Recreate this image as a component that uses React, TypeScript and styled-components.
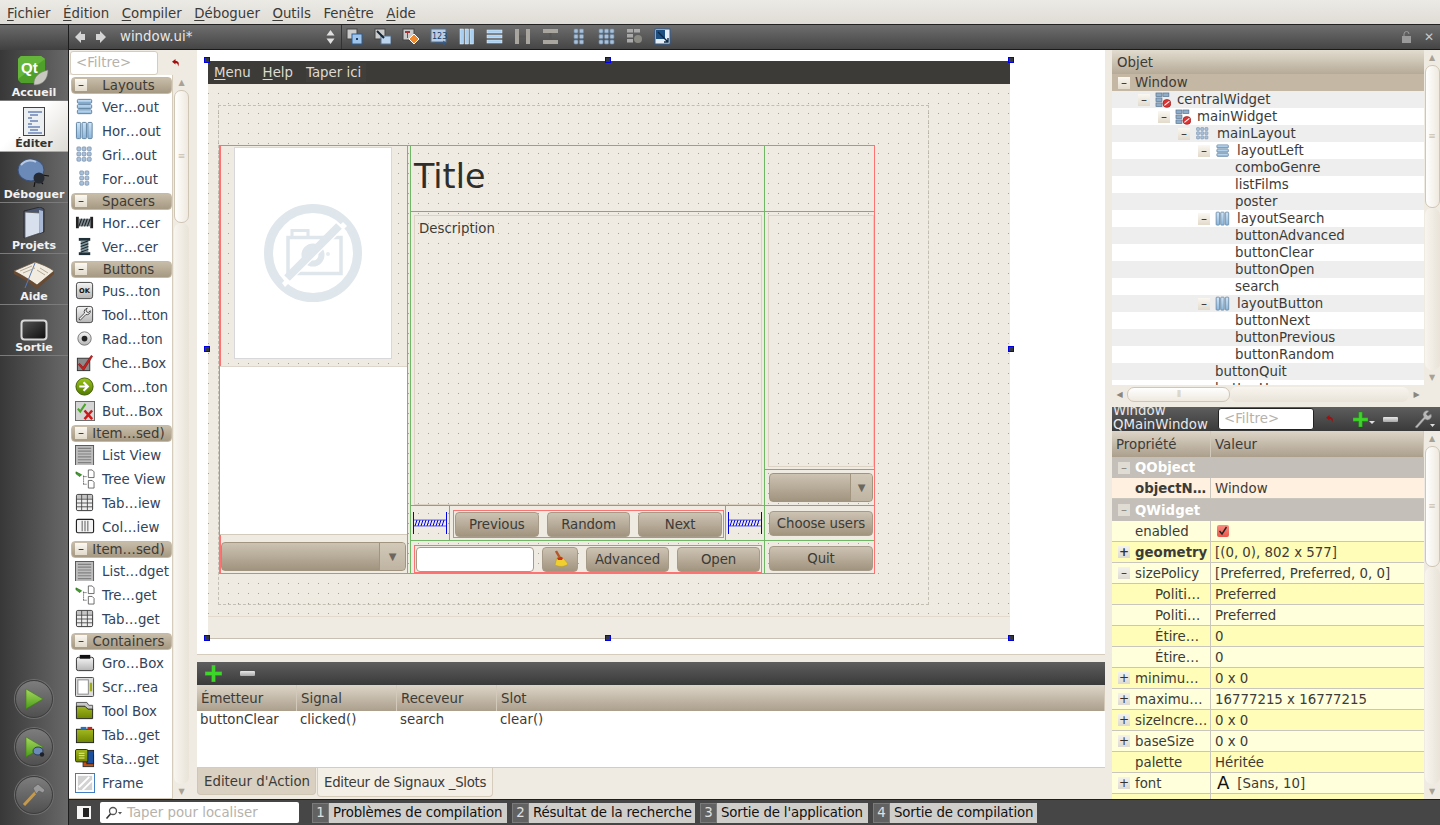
import React from 'react';
import styled, { createGlobalStyle } from 'styled-components';

const RED = '#ff7272';
const GREEN = '#6fb765';
const TAN = '#d6ccbc';
const INK = '#3c3b37';

const GlobalStyle = createGlobalStyle`
  html, body { margin: 0; padding: 0; overflow: hidden; }
  body { font-family: "DejaVu Sans", sans-serif; font-size: 13.33px; color: ${INK}; }
  * { box-sizing: border-box; }
`;

/* ---------- icons ---------- */

const BlueBar: React.FC<{ x: number; y: number; w: number; h: number }> = ({ x, y, w, h }) => (
  <rect x={x} y={y} width={w} height={h} rx="1" fill="url(#blueFill)" stroke="#5d7f9e" strokeWidth="1" />
);

const Cells: React.FC<{ cols: number; rows: number; x: number; y: number; s?: number; g?: number }> = ({ cols, rows, x, y, s = 4, g = 1.5 }) => (
  <>
    {Array.from({ length: cols * rows }).map((_, i) => (
      <rect key={i} x={x + (i % cols) * (s + g)} y={y + Math.floor(i / cols) * (s + g)} width={s} height={s} rx="1" fill="#a9c0d8" stroke="#6f8aa8" strokeWidth=".7" />
    ))}
  </>
);

const NoEntry: React.FC = () => (
  <g>
    <circle cx="12" cy="11.5" r="4" fill="#d33" stroke="#922" strokeWidth=".7" />
    <path d="M9.5 13.5l5-4" stroke="#fff" strokeWidth="1.2" />
  </g>
);

const icons: Record<string, React.ReactNode> = {
  vlayout: <><BlueBar x={2.5} y={2.5} w={15} h={4} /><BlueBar x={2.5} y={8} w={15} h={4} /><BlueBar x={2.5} y={13.5} w={15} h={4} /></>,
  hlayout: <><BlueBar x={1.5} y={1.5} w={4.5} h={17} /><BlueBar x={7.5} y={1.5} w={4.5} h={17} /><BlueBar x={13.5} y={1.5} w={4.5} h={17} /></>,
  grid: <Cells cols={3} rows={3} x={2} y={2} />,
  form: <Cells cols={2} rows={3} x={5} y={2} />,
  hspacer: (
    <g>
      <rect x="1" y="4" width="3" height="12" fill="#222" /><rect x="16" y="4" width="3" height="12" fill="#222" />
      <rect x="4" y="6" width="12" height="8" fill="#7e8a90" />
      <path d="M4 14l3-8M7 14l3-8M10 14l3-8M13 14l3-8" stroke="#1b2226" strokeWidth="1.1" />
    </g>
  ),
  vspacer: (
    <g>
      <rect x="4" y="1" width="12" height="3" fill="#1f3038" /><rect x="4" y="16" width="12" height="3" fill="#1f3038" />
      <rect x="6" y="4" width="8" height="12" fill="#7e98a0" />
      <path d="M6 7l8-3M6 10l8-3M6 13l8-3M6 16l8-3" stroke="#1b2226" strokeWidth="1.1" />
    </g>
  ),
  push: (
    <g>
      <rect x="1.5" y="1.5" width="17" height="17" rx="2.5" fill="url(#greyFill)" stroke="#444" />
      <text x="10" y="13" fontSize="7" fontWeight="700" textAnchor="middle" fill="#111" fontFamily="DejaVu Sans">OK</text>
    </g>
  ),
  tool: (
    <g>
      <rect x="1.5" y="1.5" width="17" height="17" rx="2.5" fill="url(#greyFill)" stroke="#444" />
      <path d="M13 3.5a3.5 3.5 0 0 0-3 5L4 14.5l1.5 1.5 6-6a3.5 3.5 0 0 0 4.5-4l-2 2-2-1-.5-2z" fill="#eee" stroke="#333" strokeWidth=".9" />
    </g>
  ),
  radio: <g><circle cx="10" cy="10" r="7" fill="url(#greyFill)" stroke="#777" /><circle cx="10" cy="10" r="3" fill="#222" /></g>,
  check: (
    <g>
      <rect x="2.5" y="5.5" width="13" height="13" fill="#8b8b8b" stroke="#333" />
      <path d="M5 11l3.5 4L17 2.5l1.5 1L9 18.5 3.5 12z" fill="#d41e1e" stroke="#7a0a0a" strokeWidth=".6" />
    </g>
  ),
  command: (
    <g>
      <circle cx="10" cy="10" r="9" fill="url(#greenFill)" stroke="#3e5a00" />
      <path d="M4.5 10h8M9 5.5l4.5 4.5L9 14.5" stroke="#fff" strokeWidth="2.2" fill="none" />
    </g>
  ),
  buttonbox: (
    <g>
      <rect x=".5" y=".5" width="20" height="20" fill="#d5d5d5" stroke="#666" />
      <path d="M3 8l2.5 3L11 3" stroke="#4aa52a" strokeWidth="2.2" fill="none" />
      <path d="M10 10l8 9M18 10l-8 9" stroke="#d01818" strokeWidth="2.6" />
    </g>
  ),
  list: (
    <g>
      <rect x=".5" y=".5" width="19" height="21" fill="#bdbdbd" stroke="#555" />
      <path d="M3 3.5h14M3 6.5h14M3 9.5h14M3 12.5h14M3 15.5h14M3 18.5h14" stroke="#818181" strokeWidth="1.2" />
    </g>
  ),
  tree: (
    <g>
      <path d="M1 3l6 3-2 2-4-3z" fill="#3ea02a" stroke="#205a10" strokeWidth=".6" />
      <path d="M9 7v10M9 8h3M9 16h3" stroke="#333" strokeDasharray="1 1" fill="none" />
      <path d="M14 1h4l2 2v6h-6zM14 12h4l2 2v6h-6z" fill="#fff" stroke="#444" strokeWidth=".8" />
    </g>
  ),
  table: (
    <g>
      <rect x="1.5" y="1.5" width="17" height="17" rx="1.5" fill="#eee" stroke="#333" />
      <rect x="2" y="2" width="16" height="4" fill="#c4c4c4" />
      <path d="M1.5 6.5h17M1.5 10.5h17M1.5 14.5h17M7 1.5v17M13 1.5v17" stroke="#444" strokeWidth=".9" />
    </g>
  ),
  column: (
    <g>
      <rect x="1.5" y="2.5" width="18" height="14" rx="1.5" fill="#f4f4f4" stroke="#222" strokeWidth="1.2" />
      <path d="M7.5 4v11M10.5 4v11M13.5 4v11" stroke="#555" />
    </g>
  ),
  group: (
    <g>
      <rect x="1.5" y="4.5" width="18" height="14" rx="2" fill="url(#greyFill)" stroke="#333" />
      <rect x="5" y="2" width="11" height="4" fill="#111" />
    </g>
  ),
  scroll: (
    <g>
      <rect x=".5" y=".5" width="19" height="20" rx="1" fill="#ddd" stroke="#444" />
      <rect x="3" y="3" width="11" height="15" fill="#fff" stroke="#888" />
      <rect x="15.5" y="6" width="2.5" height="9" fill="#9aaa10" />
    </g>
  ),
  toolbox: (
    <g>
      <path d="M1.5 1.5h11l2 3h4v5H1.5z" fill="#c9c9c9" stroke="#555" />
      <path d="M1.5 5.5h9l3 3h5v10h-17z" fill="url(#oliveFill)" stroke="#222" />
    </g>
  ),
  tab: (
    <g>
      <rect x="1.5" y="4.5" width="18" height="14" fill="url(#oliveFill)" stroke="#222" />
      <rect x="6" y="2" width="6" height="3" fill="#2b6fc0" />
      <rect x="13" y="2" width="5" height="3" fill="#cc2222" />
    </g>
  ),
  stacked: (
    <g>
      <rect x="8.5" y="6.5" width="11" height="12" fill="#c8500f" stroke="#333" />
      <rect x="12.5" y="1.5" width="7" height="14" fill="#1d4f9f" stroke="#222" />
      <rect x=".5" y=".5" width="13" height="13" rx="1.5" fill="url(#oliveFill)" stroke="#222" />
      <path d="M4 4.5h6M4 7h6M4 9.5h6" stroke="#f3f08a" />
    </g>
  ),
  frame: (
    <g>
      <rect x=".5" y=".5" width="20" height="20" fill="#fff" stroke="#3a78c0" />
      <rect x="3" y="3" width="15" height="15" fill="#d2d2d2" />
      <path d="M4 15L15 4M8 18L18 8" stroke="#fff" strokeWidth="2" />
    </g>
  ),
  widgetNo: (
    <g transform="scale(1.3)">
      <rect x="1" y="1" width="6" height="3.5" fill="#8fadc9" stroke="#56708d" strokeWidth=".7" />
      <rect x="8" y="1" width="6" height="3.5" fill="#8fadc9" stroke="#56708d" strokeWidth=".7" />
      <rect x="1" y="6" width="6" height="3.5" fill="#8fadc9" stroke="#56708d" strokeWidth=".7" />
      <rect x="1" y="11" width="6" height="3.5" fill="#8fadc9" stroke="#56708d" strokeWidth=".7" />
      <NoEntry />
    </g>
  ),
};

const IconDefs: React.FC = () => (
  <svg width="0" height="0" aria-hidden="true" style={{ display: 'block' }}>
    <defs>
      <linearGradient id="blueFill" x1="0" y1="0" x2="0" y2="1"><stop offset="0" stopColor="#d2e6f8" /><stop offset="1" stopColor="#8ab6dc" /></linearGradient>
      <linearGradient id="greyFill" x1="0" y1="0" x2="0" y2="1"><stop offset="0" stopColor="#f4f4f4" /><stop offset="1" stopColor="#b5b5b5" /></linearGradient>
      <linearGradient id="greenFill" x1="0" y1="0" x2="0" y2="1"><stop offset="0" stopColor="#9cc51d" /><stop offset="1" stopColor="#527a00" /></linearGradient>
      <linearGradient id="oliveFill" x1="0" y1="0" x2="0" y2="1"><stop offset="0" stopColor="#a2b820" /><stop offset="1" stopColor="#6f8500" /></linearGradient>
      <linearGradient id="playFill" x1="0" y1="0" x2="0" y2="1"><stop offset="0" stopColor="#a8d860" /><stop offset="1" stopColor="#4a9c1a" /></linearGradient>
      <linearGradient id="screenFill" x1="0" y1="0" x2="1" y2="1"><stop offset="0" stopColor="#555" /><stop offset="1" stopColor="#0c0c0c" /></linearGradient>
    </defs>
  </svg>
);

const Icon: React.FC<{ name: string; size?: number }> = ({ name, size = 20 }) => (
  <svg width={size} height={size} viewBox="0 0 21 21">{icons[name]}</svg>
);

const QtLogo = () => (
  <svg width="32" height="30" viewBox="0 0 32 30">
    <path d="M3 0h20l4 3v19l-5 5H3l-3-3V3z" fill="#4fa02a" />
    <path d="M3 0h20l4 3-27 20V3z" fill="#65b53a" />
    <text x="3" y="17" fontSize="15" fontWeight="700" fill="#fff" fontFamily="Liberation Sans">Qt</text>
    <path d="M16 29c-1-8 5-13 14-15 0 9-5 15-14 15z" fill="#c8c8c0" stroke="#777" strokeWidth=".6" />
  </svg>
);

const DocIcon = () => (
  <svg width="26" height="30" viewBox="0 0 26 30">
    <rect x="2.5" y=".5" width="21" height="28" fill="#eceff2" stroke="#444" />
    <path d="M7 5h14M9 8h8M7 11h4M9 14h8M7 17h4M7 20h12M9 23h8M7 26h14" stroke="#2b4f9a" strokeWidth="1.1" />
  </svg>
);

const BugIcon = () => (
  <svg width="34" height="30" viewBox="0 0 34 30">
    <path d="M21 21l5 5M25 17l7 1M18 24l-1 5" stroke="#111" strokeWidth="1.2" />
    <ellipse cx="14" cy="12" rx="13" ry="11" fill="#6c8ab8" stroke="#39517a" />
    <path d="M4 7c5-6 12-5 15-3" stroke="#b9cbe4" strokeWidth="2" fill="none" />
    <circle cx="22" cy="20" r="5.5" fill="#252a33" />
  </svg>
);

const FolderDoc = () => (
  <svg width="24" height="32" viewBox="0 0 24 32">
    <path d="M2 4l16-4 4 2v23l-20 6z" fill="#4a5670" stroke="#222" strokeWidth=".8" />
    <path d="M3 5l15 1v20L3 31z" fill="#d8e0ee" stroke="#555" strokeWidth=".8" />
    <path d="M17 3l4 1v21l-3 1z" fill="#a9b8d4" />
  </svg>
);

const BookIcon = () => (
  <svg width="42" height="28" viewBox="0 0 42 28">
    <path d="M1 9L22 0c6 2 14 5 19 9L24 23c-7-5-15-10-23-14z" fill="#f2ece0" stroke="#6b5b48" strokeWidth=".8" />
    <path d="M1 9v3c8 4 16 9 23 15l17-15V9L24 23C17 18 9 13 1 9z" fill="#6a4a30" />
    <path d="M22 1L12 26" stroke="#5878b8" strokeWidth="1" />
    <path d="M7 9l12-5M10 11l12-5M27 6l8 5M24 8l8 5" stroke="#b5aa96" strokeWidth="1" />
  </svg>
);

const ExitScreen = () => (
  <svg width="28" height="22" viewBox="0 0 28 22">
    <rect x="1.5" y="1.5" width="25" height="19" rx="3" fill="url(#screenFill)" stroke="#d8d8d8" strokeWidth="2" />
  </svg>
);

const PlayIcon: React.FC<{ bug?: boolean }> = ({ bug }) => (
  <svg width="22" height="22" viewBox="0 0 22 22">
    <path d="M3 1l17 10L3 21z" fill="url(#playFill)" stroke="#3c7d12" strokeWidth=".6" />
    {bug && <><ellipse cx="15" cy="15" rx="5" ry="4" fill="#6c8ab8" stroke="#2e3f5c" /><circle cx="19" cy="18.5" r="2.2" fill="#1d2026" /></>}
  </svg>
);

const HammerIcon = () => (
  <svg width="26" height="26" viewBox="0 0 26 26">
    <path d="M3 23L16 9" stroke="#c69a4c" strokeWidth="3" />
    <path d="M12 6l5-4 7 6-2 3-4-2-3 3z" fill="#9a9a9a" stroke="#555" strokeWidth=".6" />
  </svg>
);

const PlusIcon: React.FC<{ size?: number }> = ({ size = 17 }) => (
  <svg width={size} height={size} viewBox="0 0 17 17">
    <path d="M6.5 0h4v6.5H17v4h-6.5V17h-4v-6.5H0v-4h6.5z" fill="#3ed52a" stroke="#1d8a12" strokeWidth=".5" />
  </svg>
);

const MinusBar = styled.span`
  display: block;
  width: 15px;
  height: 5px;
  border-radius: 1px;
  background: linear-gradient(#e8e8e8, #a8a8a8);
`;

const ResetArrow = () => (
  <svg width="8" height="8" viewBox="0 0 8 8">
    <path d="M3.5 0L0 2.8 3.5 5.5V4c1.5 0 2.5.6 2.6 3.5C7.5 5 7 2 3.500 1.800z" fill="#a01010" />
  </svg>
);

const WrenchIcon = () => (
  <svg width="22" height="20" viewBox="0 0 22 20">
    <path d="M2 18L11 8a4 4 0 0 1 5-6l-3 3 2 2 3-2a4 4 0 0 1-6 5l-8 9z" fill="#b9b9b9" stroke="#777" strokeWidth=".5" />
    <path d="M17 15h5l-2.5 3z" fill="#ddd" />
  </svg>
);

const NavArrow: React.FC<{ right?: boolean }> = ({ right }) => (
  <svg width="10" height="12" viewBox="0 0 10 12">
    <path d={right ? 'M10 6L4 0v3H0v6h4v3z' : 'M0 6l6-6v3h4v6H6v3z'} fill="#d4d4d4" />
  </svg>
);

const toolIcons: React.ReactNode[] = [
  <g key="0"><rect x="1" y="1" width="10" height="10" fill="#ccc" stroke="#444" /><rect x="6" y="6" width="10" height="10" fill="#9ec4ec" stroke="#2c5c94" /><rect x="10" y="10" width="2" height="2" fill="#1c3e6a" /></g>,
  <g key="1"><rect x="1" y="1" width="10" height="10" fill="#ccc" stroke="#444" /><rect x="7" y="8" width="10" height="8" fill="#bcd4ee" stroke="#56708d" /><path d="M3 3l7 7" stroke="#123" strokeWidth="2" /></g>,
  <g key="2"><rect x="1" y="1" width="11" height="11" fill="#ccc" stroke="#444" /><path d="M3 3h5v2H6v5H5V5H3z" fill="#a33" /><path d="M12 6l5 5-5 5-5-5z" fill="#f08a2c" stroke="#fff" /></g>,
  <g key="3"><rect x="1" y="1" width="15" height="13" fill="#b9cde4" stroke="#56708d" /><text x="2" y="11" fontSize="8" fill="#1c3e6a" fontFamily="DejaVu Sans">123</text><path d="M5 15h10M13 13l3 2-3 2" stroke="#2c5c94" fill="none" /></g>,
  <g key="4"><rect x="2" y="1" width="3.5" height="15" fill="#a9d0f2" stroke="#e8f3fc" strokeWidth=".5" /><rect x="7" y="1" width="3.5" height="15" fill="#a9d0f2" stroke="#e8f3fc" strokeWidth=".5" /><rect x="12" y="1" width="3.5" height="15" fill="#a9d0f2" stroke="#e8f3fc" strokeWidth=".5" /></g>,
  <g key="5"><rect x="1" y="2" width="15" height="3" fill="#a9d0f2" stroke="#e8f3fc" strokeWidth=".5" /><rect x="1" y="7" width="15" height="3" fill="#a9d0f2" stroke="#e8f3fc" strokeWidth=".5" /><rect x="1" y="12" width="15" height="3" fill="#a9d0f2" stroke="#e8f3fc" strokeWidth=".5" /></g>,
  <g key="6" fill="#a8a69e"><rect x="1" y="1" width="4" height="15" /><rect x="12" y="1" width="4" height="15" /><path d="M5 8.5h7" stroke="#555" strokeWidth="2" /></g>,
  <g key="7" fill="#a8a69e"><rect x="1" y="1" width="15" height="4" /><rect x="1" y="12" width="15" height="4" /><path d="M8.5 5v7" stroke="#555" strokeWidth="2" /></g>,
  <Cells key="8" cols={2} rows={3} x={4} y={1} />,
  <Cells key="9" cols={3} rows={3} x={1} y={1} />,
  <g key="10"><rect x="1" y="1" width="6" height="3.5" fill="#aaa" /><rect x="8" y="1" width="6" height="3.5" fill="#aaa" /><rect x="1" y="6" width="6" height="3.5" fill="#aaa" /><rect x="1" y="11" width="6" height="3.5" fill="#aaa" /><circle cx="12" cy="11" r="4" fill="#8a8a82" /></g>,
  <g key="11"><rect x="1" y="1" width="15" height="15" fill="#e4eef8" stroke="#2c5c94" /><rect x="2" y="2" width="9" height="9" fill="#1d4f80" /><path d="M4 4l10 10M14 10v4h-4" stroke="#0c2a48" strokeWidth="1.4" fill="none" /></g>,
];

/* ---------- shell ---------- */

const Page = styled.div`
  width: 1440px;
  height: 825px;
  display: flex;
  flex-direction: column;
  overflow: hidden;
  background: #f0ebe2;
`;

const MenuBar = styled.nav`
  height: 24px;
  flex: none;
  display: flex;
  align-items: center;
  gap: 12.5px;
  padding: 2px 0 0 7px;
  background: linear-gradient(#eceae5, #dfdcd6);
`;

const MenuLabel = styled.span`
  white-space: nowrap;
  u { text-underline-offset: 2px; }
`;

const Body = styled.div`
  flex: 1;
  min-height: 0;
  display: flex;
`;

const ModeBar = styled.aside`
  width: 69px;
  flex: none;
  display: flex;
  flex-direction: column;
  background: linear-gradient(90deg, #383838, #686868);
  border-right: 1px solid #1d1d1d;
`;

const ModeCorner = styled.div`
  height: 26px;
  flex: none;
  background: linear-gradient(#6a6a6a, #404040);
  border-top: 1px solid #222;
`;

const ModeItem = styled.div<{ $active?: boolean }>`
  height: 51px;
  flex: none;
  display: flex;
  flex-direction: column;
  align-items: center;
  justify-content: flex-end;
  padding-bottom: 1px;
  font-size: 11px;
  font-weight: 700;
  line-height: 13px;
  color: ${({ $active }) => ($active ? '#33332f' : '#f2f2f2')};
  background: ${({ $active }) => ($active ? 'linear-gradient(135deg, #fff 40%, #dedbd5)' : 'transparent')};
  border-bottom: 1px solid ${({ $active }) => ($active ? '#a2a6c0' : '#7b7b7b')};
`;

const RunButtons = styled.div`
  margin-top: auto;
  display: flex;
  flex-direction: column;
  align-items: center;
  gap: 10px;
  padding-bottom: 11px;
`;

const RunButton = styled.div`
  width: 38px;
  height: 38px;
  display: flex;
  align-items: center;
  justify-content: center;
  border-radius: 50%;
  background: linear-gradient(#7d7d7d, #505050);
  border: 1px solid #3e3e3e;
  box-shadow: 0 0 0 1px #6f6f6f;
`;

const Content = styled.div`
  flex: 1;
  min-width: 0;
  display: flex;
  flex-direction: column;
`;

const ToolBar = styled.div`
  height: 26px;
  flex: none;
  display: flex;
  align-items: center;
  padding-bottom: 1px;
  background: linear-gradient(#6e6e6e, #454545);
  border-top: 1px solid #222;
  border-bottom: 1px solid #1a1a1a;
`;

const NavArrows = styled.div`
  width: 51px;
  flex: none;
  display: flex;
  align-items: center;
  gap: 11px;
  padding-left: 6px;
`;

const FileName = styled.div`
  width: 206px;
  flex: none;
  color: #e6e6e6;
`;

const Updown = styled.svg`
  flex: none;
  margin-right: 6px;
`;

const ToolDivider = styled.div`
  width: 1px;
  height: 24px;
  background: #333;
  margin-right: 4px;
`;

const ToolIcons = styled.div`
  display: flex;
  gap: 11px;
`;

const ToolEnd = styled.div`
  margin-left: auto;
  display: flex;
  align-items: center;
  gap: 11px;
  padding-right: 6px;
  color: #c8c8c8;
  font-size: 12px;
  line-height: 1;
`;

const Workspace = styled.div`
  flex: 1;
  min-height: 0;
  display: flex;
`;

/* ---------- widget box ---------- */

const WidgetBox = styled.section`
  width: 121px;
  flex: none;
  display: flex;
  flex-direction: column;
  background: #f0ebe2;
`;

const FilterRow = styled.div`
  height: 25px;
  flex: none;
  display: flex;
  align-items: center;
  padding: 1px 0 0 1px;
  gap: 14px;
`;

const FilterInput = styled.div<{ $dark?: boolean }>`
  width: ${({ $dark }) => ($dark ? '96px' : '88px')};
  height: ${({ $dark }) => ($dark ? '22px' : '24px')};
  flex: none;
  padding: ${({ $dark }) => ($dark ? '2px 5px' : '3px 5px')};
  background: #fff;
  border: 1px solid ${({ $dark }) => ($dark ? '#222' : TAN)};
  border-radius: 3px;
  color: #b5b2ab;
`;

const WidgetColumns = styled.div`
  flex: 1;
  min-height: 0;
  display: flex;
`;

const WidgetList = styled.div`
  width: 104px;
  flex: none;
  padding-left: 1px;
  background: #fff;
  border-right: 1px solid ${TAN};
  border-bottom: 1px solid ${TAN};
`;

const Category = styled.div`
  height: 20px;
  display: flex;
  align-items: center;
  margin: 0 0 0 1px;
  padding: 0 2px 0 4px;
  width: 101px;
  position: relative;
  &::before {
    content: '';
    position: absolute;
    inset: 2px 0 1px 0;
    border-radius: 4px;
    background: linear-gradient(#c8bda9, #a69983);
    border: 1px solid #c4baa8;
  }
`;

const Collapse = styled.span<{ $box?: number }>`
  position: relative;
  flex: none;
  display: flex;
  align-items: center;
  justify-content: center;
  width: ${({ $box }) => $box ?? 12}px;
  height: ${({ $box }) => $box ?? 12}px;
  background: linear-gradient(#fbf8f2, #e2dacb);
  font-size: 12px;
  line-height: 1;
  color: #333;
`;

const CategoryText = styled.span`
  position: relative;
  flex: 1;
  text-align: center;
  white-space: nowrap;
`;

const WidgetRow = styled.div`
  height: 24px;
  display: flex;
  align-items: center;
  gap: 7px;
  padding-left: 4px;
  white-space: nowrap;
  color: #33445a;
`;

const IconSlot = styled.span`
  width: 21px;
  height: 21px;
  flex: none;
  display: flex;
  align-items: center;
  justify-content: center;
`;

const VTrack = styled.div<{ $width: number }>`
  width: ${({ $width }) => $width}px;
  flex: none;
  display: flex;
  flex-direction: column;
  align-items: center;
  background: #f0ebe2;
`;

const ArrowCap = styled.div`
  height: 15px;
  flex: none;
  display: flex;
  align-items: center;
  justify-content: center;
  font-size: 8px;
  line-height: 1;
  color: #a8a296;
`;

const Thumb = styled.div<{ $size: number; $horizontal?: boolean }>`
  flex: none;
  ${({ $size, $horizontal }) => ($horizontal ? `width: ${$size}px; height: 15px;` : `height: ${$size}px; width: 15px;`)}
  border: 1px solid #cfc6b6;
  border-radius: 7px;
  background: ${({ $horizontal }) => ($horizontal ? 'linear-gradient(#fff, #efe9df)' : 'linear-gradient(90deg, #fff, #efe9df)')};
  display: flex;
  align-items: center;
  justify-content: center;
  color: #c9c1b2;
  font-size: 9px;
  line-height: 1;
`;

const TrackRest = styled.div<{ $horizontal?: boolean }>`
  flex: 1;
  ${({ $horizontal }) => ($horizontal ? 'height: 15px;' : 'width: 15px;')}
  border-radius: 7px;
  background: ${({ $horizontal }) => ($horizontal ? 'linear-gradient(#f8f5ef, #e9e3d8)' : 'linear-gradient(90deg, #f8f5ef, #e9e3d8)')};
`;

const VScroll: React.FC<{ width: number; thumb: number }> = ({ width, thumb }) => (
  <VTrack $width={width}>
    <ArrowCap>▲</ArrowCap>
    <Thumb $size={thumb}>≡</Thumb>
    <TrackRest />
    <ArrowCap>▼</ArrowCap>
  </VTrack>
);

/* ---------- centre: form editor ---------- */

const SplitterV = styled.div`
  width: 7px;
  flex: none;
  background: #f0ebe2;
`;

const Center = styled.main`
  width: 908px;
  flex: none;
  display: flex;
  flex-direction: column;
`;

const FormArea = styled.div`
  height: 605px;
  flex: none;
  padding: 11px;
  background: #fff;
  border-bottom: 1px solid ${TAN};
`;

const FormWindow = styled.div`
  position: relative;
  width: 802px;
  height: 577px;
  display: flex;
  flex-direction: column;
  background: #f0ebe2;
  box-shadow: 0 1px 0 #c8c0b2;
`;

const Handle = styled.span<{ $x: number; $y: number }>`
  position: absolute;
  left: ${({ $x }) => $x}px;
  top: ${({ $y }) => $y}px;
  width: 6px;
  height: 6px;
  background: #33383f;
  border: 1px solid #0000e6;
`;

const FormMenu = styled.div`
  height: 23px;
  flex: none;
  display: flex;
  align-items: center;
  padding-left: 6px;
  gap: 12px;
  background: #3c3b37;
  color: #dfdbd2;
`;

const FormMenuItem = styled.span<{ $placeholder?: boolean }>`
  ${({ $placeholder }) => $placeholder && 'background: #413f3b; padding: 2px 5px 2px 0; margin-left: 1px;'}
  u { text-underline-offset: 2px; }
`;

const FormBody = styled.div`
  flex: 1;
  padding: 21px 0 0 10px;
  background-color: #f0ebe2;
  background-image: radial-gradient(circle at 0.5px 0.5px, #a8a297 0.5px, transparent 0.5px);
  background-size: 10px 10px;
  background-position: 0 9px;
`;

const MainLayoutFrame = styled.div`
  width: 711px;
  height: 500px;
  padding-top: 39px;
  border: 1px dashed #c4bfb5;
`;

const DesignGrid = styled.div`
  width: 656px;
  height: 429px;
  display: grid;
  grid-template-columns: 190px 354px 110px;
  grid-template-rows: 66px 258px 36px 35px 32px;
  border: 1px solid ${RED};
`;

const LeftCell = styled.div`
  grid-column: 1;
  grid-row: 1 / 6;
  width: 188px;
  display: flex;
  flex-direction: column;
  border-right: 1px solid ${RED};
  box-shadow: inset 1px 0 0 ${RED};
`;

const Poster = styled.div`
  width: 158px;
  height: 212px;
  flex: none;
  margin: 1px 0 0 14px;
  display: flex;
  align-items: center;
  justify-content: center;
  background: #fff;
  border: 1px solid #d8d8da;
`;

const FilmList = styled.div`
  height: 169px;
  flex: none;
  margin-top: 7px;
  background: #fff;
  border-top: 1px solid #dcd6cc;
  border-bottom: 1px solid #d2cabb;
`;

const Cell = styled.div<{ $col: number; $row: string; $bottom?: boolean; $pad?: string }>`
  grid-column: ${({ $col }) => $col};
  grid-row: ${({ $row }) => $row};
  border-left: 1px solid ${GREEN};
  ${({ $bottom }) => $bottom && `border-bottom: 1px solid ${GREEN};`}
  padding: ${({ $pad }) => $pad ?? '0'};
  min-height: 0;
  display: flex;
`;

const TitleText = styled.div`
  font-size: 33.33px;
  line-height: 1;
  padding: 14px 0 0 3px;
  color: #2f2e2b;
`;

const Frame = styled.div`
  flex: 1;
  padding: 5px 4px;
  border: 1px solid #dcd3c4;
`;

const Combo = styled.div<{ $arrow: number }>`
  flex: 1;
  height: 29px;
  display: flex;
  border: 1px solid #a1957f;
  border-radius: 4px;
  overflow: hidden;
  background: linear-gradient(#cdc3b3, #a1947f);
  span {
    margin-left: auto;
    width: ${({ $arrow }) => $arrow}px;
    display: flex;
    align-items: center;
    justify-content: center;
    background: linear-gradient(#d2c9b9, #bfb4a2);
    border-left: 1px solid #a1957f;
    font-size: 10px;
    color: #6b675e;
  }
`;

const LeftCombo = styled(Combo)`
  flex: none;
  margin: 7px 1px 0;
`;

const NavCell = styled.div`
  grid-column: 2;
  grid-row: 4;
  display: grid;
  grid-template-columns: 39px 1fr 39px;
  border-left: 1px solid ${GREEN};
  border-bottom: 1px solid ${GREEN};
`;

const SpacerCell = styled.div<{ $last?: boolean }>`
  display: flex;
  align-items: center;
  justify-content: center;
  ${({ $last }) => ($last ? `border-left: 1px solid ${GREEN}; padding-left: 1px;` : `border-right: 1px solid ${GREEN};`)}
`;

const RedGroup = styled.div<{ $gap: number; $margin: string; $pad: string }>`
  flex: 1;
  display: flex;
  align-items: center;
  gap: ${({ $gap }) => $gap}px;
  margin: ${({ $margin }) => $margin};
  padding: ${({ $pad }) => $pad};
  border: 1px solid ${RED};
`;

const GroupCell = styled.div`
  grid-column: 2;
  grid-row: 5;
  display: flex;
  border-left: 1px solid ${GREEN};
`;

const DesignButton = styled.div<{ $width?: number }>`
  height: 25px;
  flex: ${({ $width }) => ($width ? `0 0 ${$width}px` : '1')};
  display: flex;
  align-items: center;
  justify-content: center;
  white-space: nowrap;
  letter-spacing: -0.1px;
  border: 1px solid #a69b88;
  border-radius: 4px;
  background: linear-gradient(#cdc3b3, #a1947f);
  color: ${INK};
`;

const SearchInput = styled.div`
  width: 118px;
  height: 25px;
  flex: none;
  background: #fff;
  border: 1px solid #a69b88;
  border-radius: 4px;
`;

const FormStatus = styled.div`
  height: 22px;
  flex: none;
  background: #f0ebe2;
  border-top: 1px solid #e2dbcd;
`;

const Spring = () => (
  <svg width="35" height="22" viewBox="0 0 35 22">
    <path d="M.5 0v22M33.5 0v22" stroke="#0000e6" />
    <path d="M1 8h32M1 14h32" stroke="#0000e6" strokeWidth=".6" />
    <path d="M2 14l2-6M5 14l2-6M8 14l2-6M11 14l2-6M14 14l2-6M17 14l2-6M20 14l2-6M23 14l2-6M26 14l2-6M29 14l2-6" stroke="#0000e6" strokeWidth="1" />
  </svg>
);

const BroomIcon = () => (
  <svg width="20" height="20" viewBox="0 0 20 20">
    <path d="M6 2l4 7" stroke="#b5552a" strokeWidth="2.5" />
    <path d="M7 9c3-2 6-1 7 1l4 5c-3 3-9 3-13 1 1-3 1-5 2-7z" fill="#f0d030" stroke="#b89a10" strokeWidth=".5" />
    <path d="M7 9c2-1.5 5-1.5 6 0l-1 2-4 0z" fill="#c83020" />
  </svg>
);

const NoPhoto = () => (
  <svg width="100" height="100" viewBox="0 0 100 100">
    <g fill="none" stroke="#dfe6ec">
      <circle cx="50" cy="50" r="44.5" strokeWidth="9" />
      <path d="M29 27.5h16v7H29z" strokeWidth="3" />
      <path d="M25 34.5h53v36H25z" strokeWidth="3.5" />
      <circle cx="50" cy="52" r="8.5" strokeWidth="6" />
    </g>
    <circle cx="65" cy="51" r="2" fill="#e6ebef" />
    <path d="M80 19L19 80l3 4 62-61z" fill="#fff" />
    <path d="M76 23L24 75" stroke="#dfe6ec" strokeWidth="8" />
  </svg>
);

/* ---------- signals panel ---------- */

const PanelGrip = styled.div`
  height: 7px;
  flex: none;
  background: #f0ebe2;
`;

const DarkBar = styled.div<{ $height: number }>`
  height: ${({ $height }) => $height}px;
  flex: none;
  display: flex;
  align-items: center;
  background: linear-gradient(#5e5e5e, #3a3a3a);
`;

const SignalBar = styled(DarkBar)`
  gap: 18px;
  padding-left: 8px;
`;

const HeaderRow = styled.div<{ $height: number; $columns: string }>`
  height: ${({ $height }) => $height}px;
  flex: none;
  display: grid;
  grid-template-columns: ${({ $columns }) => $columns};
  background: linear-gradient(#ddd5c8, #ab9f8c);
`;

const HeaderCell = styled.div`
  display: flex;
  align-items: center;
  padding-left: 4px;
  border-right: 1px solid #d2c9ba;
`;

const SignalBody = styled.div`
  height: 57px;
  flex: none;
  padding-top: 1px;
  background: #fff;
  border-bottom: 1px solid ${TAN};
`;

const SignalRow = styled.div`
  height: 16px;
  display: grid;
  grid-template-columns: 100px 100px 100px 1fr;
  line-height: 16px;
  padding-left: 3px;
`;

const TabStrip = styled.div`
  height: 30px;
  flex: none;
  display: flex;
  align-items: flex-start;
  background: #f0ebe2;
`;

const PanelTab = styled.div<{ $active?: boolean }>`
  height: ${({ $active }) => ($active ? 29 : 27)}px;
  display: flex;
  align-items: center;
  padding: ${({ $active }) => ($active ? '0 6px' : '0 5px 0 6px')};
  background: ${({ $active }) => ($active ? '#f4efe6' : '#d9d0c1')};
  border: 1px solid ${({ $active }) => ($active ? TAN : '#cfc6b6')};
  border-top: none;
  border-radius: 0 0 4px 4px;
  white-space: nowrap;
  letter-spacing: ${({ $active }) => ($active ? '-0.32px' : '0')};
  margin-left: ${({ $active }) => ($active ? '1px' : '0')};
`;

/* ---------- right column ---------- */

const RightColumn = styled.aside`
  flex: 1;
  min-width: 0;
  display: flex;
  flex-direction: column;
  padding-left: 7px;
`;

const TreePanel = styled.div`
  height: 353px;
  flex: none;
  display: flex;
  flex-direction: column;
`;

const TreeTop = styled.div`
  flex: 1;
  min-height: 0;
  display: flex;
`;

const TreeMain = styled.div`
  flex: 1;
  min-width: 0;
  overflow: hidden;
  background: #fff;
`;

const PanelHeader = styled.div`
  height: 24px;
  display: flex;
  align-items: center;
  padding-left: 5px;
  background: linear-gradient(#e2dccf, #b6aa97);
`;

const TreeRow = styled.div<{ $level: number; $shade: 'sel' | 'alt' | 'none' }>`
  height: 17px;
  display: flex;
  align-items: center;
  padding-left: ${({ $level }) => 6 + $level * 20}px;
  white-space: nowrap;
  background: ${({ $shade }) => ($shade === 'sel' ? '#c4b8a5' : $shade === 'alt' ? '#eeeeee' : '#fff')};
`;

const Expander = styled(Collapse)<{ $hidden?: boolean }>`
  margin-right: 5px;
  visibility: ${({ $hidden }) => ($hidden ? 'hidden' : 'visible')};
`;

const TreeIcon = styled.span`
  width: 16px;
  height: 16px;
  flex: none;
  margin-right: 6px;
  display: flex;
  align-items: center;
  justify-content: center;
  overflow: visible;
`;

const HScroll = styled.div`
  height: 18px;
  flex: none;
  display: flex;
  align-items: center;
  padding-right: 16px;
  background: #f0ebe2;
`;

const HArrow = styled.div`
  width: 15px;
  flex: none;
  display: flex;
  justify-content: center;
  font-size: 8px;
  color: #8c867a;
`;

const PropBar = styled(DarkBar)`
  margin-top: 4px;
  padding-left: 1px;
  overflow: hidden;
`;

const PropTitle = styled.div`
  width: 105px;
  flex: none;
  margin-top: -3px;
  line-height: 14px;
  color: #e8e8e8;
  white-space: nowrap;
`;

const PropTools = styled.div`
  flex: 1;
  display: flex;
  align-items: center;
  padding-left: 12px;
`;

const PropToolGap = styled.span<{ $width: number }>`
  display: block;
  flex: none;
  width: ${({ $width }) => $width}px;
`;

const DropCaret = styled.span`
  width: 0;
  height: 0;
  flex: none;
  align-self: flex-end;
  margin: 0 0 5px 1px;
  border-left: 3px solid transparent;
  border-right: 3px solid transparent;
  border-top: 3px solid #e0e0e0;
`;

const PropsPanel = styled.div`
  flex: 1;
  min-height: 0;
  display: flex;
`;

const PropsMain = styled.div`
  flex: 1;
  min-width: 0;
  overflow: hidden;
  background: #ffffd8;
`;

const PropRow = styled.div<{ $tone: string }>`
  height: 21px;
  display: grid;
  grid-template-columns: 99px 1fr;
  background: ${({ $tone }) => $tone};
  border-bottom: 1px solid #c9c6bd;
`;

const PropName = styled.div<{ $bold?: boolean; $indent: number }>`
  display: flex;
  align-items: center;
  padding-left: ${({ $indent }) => $indent}px;
  white-space: nowrap;
  font-weight: ${({ $bold }) => ($bold ? 700 : 400)};
  border-right: 1px solid #c9c6bd;
`;

const PropValue = styled.div`
  display: flex;
  align-items: center;
  padding-left: 4px;
  white-space: nowrap;
`;

const GroupRow = styled.div<{ $tall?: boolean }>`
  height: ${({ $tall }) => ($tall ? 22 : 21)}px;
  display: flex;
  align-items: center;
  padding-left: 6px;
  gap: 5px;
  background: #c4bfb8;
  color: #fff;
  font-weight: 700;
`;

const GroupBox = styled.span`
  width: 12px;
  height: 12px;
  background: #e0dcd4;
  display: flex;
  align-items: center;
  justify-content: center;
  color: #8a867e;
  font-size: 12px;
  line-height: 1;
  font-weight: 400;
`;

const SmallBox = styled(Collapse)`
  width: 12px;
  height: 12px;
  margin-right: 5px;
  background: linear-gradient(#f4f2ed, #dedad2);
`;

const CheckMark = styled.span`
  width: 12px;
  height: 12px;
  display: flex;
  align-items: center;
  justify-content: center;
  margin-left: 2px;
  background: linear-gradient(#fb8c80, #e8584a);
  border-radius: 2px;
`;

const FontGlyph = styled.span`
  font-size: 18px;
  line-height: 1;
  color: #111;
  margin-right: 8px;
  margin-left: 2px;
`;

/* ---------- status bar ---------- */

const StatusBar = styled.footer`
  height: 26px;
  flex: none;
  display: flex;
  align-items: center;
  background: #464646;
  border-top: 1px solid #1e1e1e;
  padding-left: 8px;
`;

const SideToggle = styled.div`
  width: 14px;
  height: 13px;
  flex: none;
  border: 2px solid #f5f5f5;
  border-left-width: 6px;
  background: #222;
  margin-right: 9px;
`;

const Locator = styled.div`
  width: 199px;
  height: 21px;
  flex: none;
  display: flex;
  align-items: center;
  gap: 4px;
  padding-left: 5px;
  background: #fff;
  border-radius: 2px;
  color: #b5b2ab;
  margin-right: 13px;
`;

const OutputButton = styled.div<{ $width: number }>`
  height: 20px;
  width: ${({ $width }) => $width}px;
  flex: none;
  display: flex;
  align-items: stretch;
  margin-right: 5px;
  color: #111;
  white-space: nowrap;
  letter-spacing: -0.15px;
`;

const OutputNumber = styled.span`
  width: 17px;
  flex: none;
  display: flex;
  align-items: center;
  justify-content: center;
  background: #626262;
  color: #e0e0e0;
  border: 1px solid #7b7b7b;
`;

const OutputLabel = styled.span`
  flex: 1;
  display: flex;
  align-items: center;
  padding-left: 4px;
  background: #d0cecb;
`;

/* ---------- data ---------- */

type PaletteEntry = { title: string; items: [string, string][] };

const palette: PaletteEntry[] = [
  { title: 'Layouts', items: [['vlayout', 'Ver…out'], ['hlayout', 'Hor…out'], ['grid', 'Gri…out'], ['form', 'For…out']] },
  { title: 'Spacers', items: [['hspacer', 'Hor…cer'], ['vspacer', 'Ver…cer']] },
  { title: 'Buttons', items: [['push', 'Pus…ton'], ['tool', 'Tool…tton'], ['radio', 'Rad…ton'], ['check', 'Che…Box'], ['command', 'Com…ton'], ['buttonbox', 'But…Box']] },
  { title: 'Item…sed)', items: [['list', 'List View'], ['tree', 'Tree View'], ['table', 'Tab…iew'], ['column', 'Col…iew']] },
  { title: 'Item…sed)', items: [['list', 'List…dget'], ['tree', 'Tre…get'], ['table', 'Tab…get']] },
  { title: 'Containers', items: [['group', 'Gro…Box'], ['scroll', 'Scr…rea'], ['toolbox', 'Tool Box'], ['tab', 'Tab…get'], ['stacked', 'Sta…get'], ['frame', 'Frame']] },
];

type TreeNode = { name: string; level: number; icon?: string; open?: boolean };

const tree: TreeNode[] = [
  { name: 'Window', level: 0, open: true },
  { name: 'centralWidget', level: 1, icon: 'widgetNo', open: true },
  { name: 'mainWidget', level: 2, icon: 'widgetNo', open: true },
  { name: 'mainLayout', level: 3, icon: 'grid', open: true },
  { name: 'layoutLeft', level: 4, icon: 'vlayout', open: true },
  { name: 'comboGenre', level: 5 },
  { name: 'listFilms', level: 5 },
  { name: 'poster', level: 5 },
  { name: 'layoutSearch', level: 4, icon: 'hlayout', open: true },
  { name: 'buttonAdvanced', level: 5 },
  { name: 'buttonClear', level: 5 },
  { name: 'buttonOpen', level: 5 },
  { name: 'search', level: 5 },
  { name: 'layoutButton', level: 4, icon: 'hlayout', open: true },
  { name: 'buttonNext', level: 5 },
  { name: 'buttonPrevious', level: 5 },
  { name: 'buttonRandom', level: 5 },
  { name: 'buttonQuit', level: 4 },
  { name: 'buttonUsers', level: 4 },
];

type PropItem = { name: string; value: string; bold?: boolean; box?: '+' | '–'; sub?: boolean };

const TONE_A = '#ffffdc';
const TONE_B = '#fffdb8';

const widgetProps: PropItem[] = [
  { name: 'geometry', value: '[(0, 0), 802 x 577]', bold: true, box: '+' },
  { name: 'sizePolicy', value: '[Preferred, Preferred, 0, 0]', box: '–' },
  { name: 'Politi…', value: 'Preferred', sub: true },
  { name: 'Politi…', value: 'Preferred', sub: true },
  { name: 'Étire…', value: '0', sub: true },
  { name: 'Étire…', value: '0', sub: true },
  { name: 'minimu…', value: '0 x 0', box: '+' },
  { name: 'maximu…', value: '16777215 x 16777215', box: '+' },
  { name: 'sizeIncre…', value: '0 x 0', box: '+' },
  { name: 'baseSize', value: '0 x 0', box: '+' },
  { name: 'palette', value: 'Héritée' },
];

const handles: [number, number][] = [[-4, -4], [397, -4], [800, -4], [-4, 285], [800, 285], [-4, 574], [397, 574], [800, 574]];

const modes: { label: string; art: React.ReactNode }[] = [
  { label: 'Accueil', art: <QtLogo /> },
  { label: 'Éditer', art: <DocIcon /> },
  { label: 'Déboguer', art: <BugIcon /> },
  { label: 'Projets', art: <FolderDoc /> },
  { label: 'Aide', art: <BookIcon /> },
  { label: 'Sortie', art: <ExitScreen /> },
];

const menuItems: [string, string][] = [['F', 'ichier'], ['É', 'dition'], ['C', 'ompiler'], ['D', 'éboguer'], ['O', 'utils']];

const outputs: [string, string, number][] = [
  ['1', 'Problèmes de compilation', 195],
  ['2', 'Résultat de la recherche', 183],
  ['3', "Sortie de l'application", 168],
  ['4', 'Sortie de compilation', 164],
];

/* ---------- page ---------- */

export default function App() {
  return (
    <Page>
      <GlobalStyle />
      <IconDefs />
      <MenuBar>
        {menuItems.map(([key, rest]) => (
          <MenuLabel key={key}><u>{key}</u>{rest}</MenuLabel>
        ))}
        <MenuLabel>Fen<u>ê</u>tre</MenuLabel>
        <MenuLabel><u>A</u>ide</MenuLabel>
      </MenuBar>

      <Body>
        <ModeBar>
          <ModeCorner />
          {modes.map((m, i) => (
            <ModeItem key={m.label} $active={i === 1}>
              {m.art}
              {m.label}
            </ModeItem>
          ))}
          <RunButtons>
            <RunButton><PlayIcon /></RunButton>
            <RunButton><PlayIcon bug /></RunButton>
            <RunButton><HammerIcon /></RunButton>
          </RunButtons>
        </ModeBar>

        <Content>
          <ToolBar>
            <NavArrows><NavArrow /><NavArrow right /></NavArrows>
            <FileName>window.ui*</FileName>
            <Updown width="9" height="14" viewBox="0 0 9 14"><path d="M4.5 0l4 5.5H.5zM4.500 14l4-5.500H.5z" fill="#e0e0e0" /></Updown>
            <ToolDivider />
            <ToolIcons>
              {toolIcons.map((node, i) => (
                <svg key={i} width="17" height="17" viewBox="0 0 17 17">{node}</svg>
              ))}
            </ToolIcons>
            <ToolEnd>
              <svg width="12" height="12" viewBox="0 0 12 12"><rect x="1" y="5" width="9" height="7" fill="#9a9a9a" /><path d="M3 5V3a2.5 2.5 0 0 1 5 0" stroke="#9a9a9a" fill="none" /></svg>
              <span>✕</span>
            </ToolEnd>
          </ToolBar>

          <Workspace>
            <WidgetBox>
              <FilterRow>
                <FilterInput>&lt;Filtre&gt;</FilterInput>
                <ResetArrow />
              </FilterRow>
              <WidgetColumns>
                <WidgetList>
                  {palette.map((section, s) => (
                    <React.Fragment key={s}>
                      <Category>
                        <Collapse>–</Collapse>
                        <CategoryText>{section.title}</CategoryText>
                      </Category>
                      {section.items.map(([icon, label], i) => (
                        <WidgetRow key={i}>
                          <IconSlot><Icon name={icon} /></IconSlot>
                          {label}
                        </WidgetRow>
                      ))}
                    </React.Fragment>
                  ))}
                </WidgetList>
                <VScroll width={17} thumb={133} />
              </WidgetColumns>
            </WidgetBox>
            <SplitterV />

            <Center>
              <FormArea>
                <FormWindow>
                  {handles.map(([x, y]) => <Handle key={`${x}-${y}`} $x={x} $y={y} />)}
                  <FormMenu>
                    <FormMenuItem><u>M</u>enu</FormMenuItem>
                    <FormMenuItem><u>H</u>elp</FormMenuItem>
                    <FormMenuItem $placeholder>Taper ici</FormMenuItem>
                  </FormMenu>
                  <FormBody>
                    <MainLayoutFrame>
                      <DesignGrid>
                        <LeftCell>
                          <Poster><NoPhoto /></Poster>
                          <FilmList />
                          <LeftCombo $arrow={26}><span>▼</span></LeftCombo>
                        </LeftCell>
                        <Cell $col={2} $row="1" $bottom><TitleText>Title</TitleText></Cell>
                        <Cell $col={3} $row="1" $bottom />
                        <Cell $col={2} $row="2 / 4" $bottom $pad="3px 2px 0 3px"><Frame>Description</Frame></Cell>
                        <Cell $col={3} $row="2" $bottom $pad="3px 0 2px 3px"><Frame /></Cell>
                        <Cell $col={3} $row="3" $bottom $pad="3px 1px 2px 4px"><Combo $arrow={22}><span>▼</span></Combo></Cell>
                        <NavCell>
                          <SpacerCell><Spring /></SpacerCell>
                          <RedGroup $gap={8} $margin="4px 1px 2px 3px" $pad="0 1px">
                            <DesignButton>Previous</DesignButton>
                            <DesignButton>Random</DesignButton>
                            <DesignButton>Next</DesignButton>
                          </RedGroup>
                          <SpacerCell $last><Spring /></SpacerCell>
                        </NavCell>
                        <Cell $col={3} $row="4" $bottom $pad="5px 1px 3px 4px"><DesignButton>Choose users</DesignButton></Cell>
                        <GroupCell>
                          <RedGroup $gap={8} $margin="4px 2px 0 3px" $pad="0 1px">
                            <SearchInput />
                            <DesignButton $width={36}><BroomIcon /></DesignButton>
                            <DesignButton>Advanced</DesignButton>
                            <DesignButton>Open</DesignButton>
                          </RedGroup>
                        </GroupCell>
                        <Cell $col={3} $row="5" $pad="5px 1px 2px 4px"><DesignButton>Quit</DesignButton></Cell>
                      </DesignGrid>
                    </MainLayoutFrame>
                  </FormBody>
                  <FormStatus />
                </FormWindow>
              </FormArea>

              <PanelGrip />
              <SignalBar $height={23}>
                <PlusIcon />
                <MinusBar />
              </SignalBar>
              <HeaderRow $height={26} $columns="100px 100px 100px 1fr">
                <HeaderCell>Émetteur</HeaderCell>
                <HeaderCell>Signal</HeaderCell>
                <HeaderCell>Receveur</HeaderCell>
                <HeaderCell>Slot</HeaderCell>
              </HeaderRow>
              <SignalBody>
                <SignalRow>
                  <span>buttonClear</span>
                  <span>clicked()</span>
                  <span>search</span>
                  <span>clear()</span>
                </SignalRow>
              </SignalBody>
              <TabStrip>
                <PanelTab>Editeur d'Action</PanelTab>
                <PanelTab $active>Editeur de Signaux _Slots</PanelTab>
              </TabStrip>
            </Center>

            <RightColumn>
              <TreePanel>
                <TreeTop>
                  <TreeMain>
                    <PanelHeader>Objet</PanelHeader>
                    {tree.map((node, i) => (
                      <TreeRow key={node.name} $level={node.level} $shade={i === 0 ? 'sel' : i % 2 ? 'alt' : 'none'}>
                        <Expander $hidden={!node.open}>–</Expander>
                        {node.icon && <TreeIcon><Icon name={node.icon} size={18} /></TreeIcon>}
                        {node.name}
                      </TreeRow>
                    ))}
                  </TreeMain>
                  <VScroll width={16} thumb={143} />
                </TreeTop>
                <HScroll>
                  <HArrow>◀</HArrow>
                  <Thumb $size={103} $horizontal>⦀</Thumb>
                  <TrackRest $horizontal />
                  <HArrow>▶</HArrow>
                </HScroll>
              </TreePanel>

              <PropBar $height={24}>
                <PropTitle>Window<br />QMainWindow</PropTitle>
                <FilterInput $dark>&lt;Filtre&gt;</FilterInput>
                <PropTools>
                  <ResetArrow />
                  <PropToolGap $width={19} />
                  <PlusIcon size={15} />
                  <DropCaret />
                  <PropToolGap $width={8} />
                  <MinusBar />
                  <PropToolGap $width={15} />
                  <WrenchIcon />
                </PropTools>
              </PropBar>

              <PropsPanel>
                <PropsMain>
                  <HeaderRow $height={26} $columns="99px 1fr">
                    <HeaderCell>Propriété</HeaderCell>
                    <HeaderCell>Valeur</HeaderCell>
                  </HeaderRow>
                  <GroupRow><GroupBox>–</GroupBox>QObject</GroupRow>
                  <PropRow $tone="#fff0e0">
                    <PropName $bold $indent={23}>objectN…</PropName>
                    <PropValue>Window</PropValue>
                  </PropRow>
                  <GroupRow $tall><GroupBox>–</GroupBox>QWidget</GroupRow>
                  <PropRow $tone={TONE_A}>
                    <PropName $indent={23}>enabled</PropName>
                    <PropValue>
                      <CheckMark>
                        <svg width="10" height="10" viewBox="0 0 10 10"><path d="M1.5 5l2.5 3 4.5-7" stroke="#222" strokeWidth="1.4" fill="none" /></svg>
                      </CheckMark>
                    </PropValue>
                  </PropRow>
                  {widgetProps.map((p, i) => (
                    <PropRow key={`${p.name}-${i}`} $tone={i % 2 === 0 ? TONE_B : TONE_A}>
                      <PropName $bold={p.bold} $indent={p.box ? 6 : p.sub ? 43 : 23}>
                        {p.box && <SmallBox>{p.box}</SmallBox>}
                        {p.name}
                      </PropName>
                      <PropValue>{p.value}</PropValue>
                    </PropRow>
                  ))}
                  <PropRow $tone={TONE_A}>
                    <PropName $indent={6}><SmallBox>+</SmallBox>font</PropName>
                    <PropValue><FontGlyph>A</FontGlyph>[Sans, 10]</PropValue>
                  </PropRow>
                  <PropRow $tone={TONE_B}><PropName $indent={23} /><PropValue /></PropRow>
                </PropsMain>
                <VScroll width={16} thumb={121} />
              </PropsPanel>
            </RightColumn>
          </Workspace>

          <StatusBar>
            <SideToggle />
            <Locator>
              <svg width="18" height="14" viewBox="0 0 18 14"><circle cx="8" cy="5" r="3.5" fill="none" stroke="#555" strokeWidth="1.3" /><path d="M5.5 8L1.5 12.5" stroke="#333" strokeWidth="1.6" /><path d="M13 6h4l-2 2.5z" fill="#555" /></svg>
              Taper pour localiser
            </Locator>
            {outputs.map(([n, label, w]) => (
              <OutputButton key={n} $width={w}>
                <OutputNumber>{n}</OutputNumber>
                <OutputLabel>{label}</OutputLabel>
              </OutputButton>
            ))}
          </StatusBar>
        </Content>
      </Body>
    </Page>
  );
}
